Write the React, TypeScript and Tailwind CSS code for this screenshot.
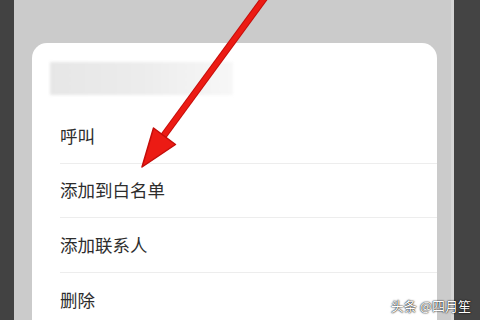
import React from "react";

const items = ["呼叫", "添加到白名单", "添加联系人", "删除"];

export default function App() {
  return (
    <div
      className="relative flex h-[320px] w-[480px] overflow-hidden"
      style={{ fontFamily: '"Noto Sans CJK SC", "Noto Sans", sans-serif' }}
    >
      <div className="w-[14px] bg-[#424242]" />
      <div className="flex flex-1 flex-col bg-[#cbcbcb] pl-[18px] pr-[14px] pt-[43px]">
        <div className="flex flex-1 flex-col rounded-t-[15px] bg-white pl-[18px] pt-[19px]">
          <div className="h-[33px] w-[183px] bg-gradient-to-r from-[#e6e6e6] via-[#ececec] to-[#f7f7f7] blur-[1.5px]" />
          <div className="mt-[14px] flex flex-col pl-[10px]">
            {items.map((label, i) => (
              <div
                key={label}
                className={`flex h-[54.5px] items-center text-[17.5px] text-[#2d2d2d] ${
                  i < items.length - 1 ? "border-b border-[#ededed]" : ""
                }`}
              >
                {label}
              </div>
            ))}
          </div>
        </div>
      </div>
      <div className="w-[3px] bg-[#d6d6d6]" />
      <div className="w-[26px] bg-[#444444]" />

      <svg
        className="absolute left-0 top-0"
        width="480"
        height="320"
        viewBox="0 0 480 320"
      >
        <line
          x1="266"
          y1="-4"
          x2="162"
          y2="138"
          stroke="#c40d0a"
          strokeWidth="7"
        />
        <line
          x1="266"
          y1="-4"
          x2="162"
          y2="138"
          stroke="#ec1b14"
          strokeWidth="5"
        />
        <polygon
          points="142,167 153.5,128 175.5,144.5"
          fill="#ec1b14"
          stroke="#c40d0a"
          strokeWidth="1.5"
          strokeLinejoin="round"
        />
      </svg>

      <div
        className="absolute bottom-[5px] right-[9px] text-[13px] text-white"
        style={{ textShadow: "0 0 2px rgba(0,0,0,0.9), 0 0 1px #000" }}
      >
        头条 @四月笙
      </div>
    </div>
  );
}
